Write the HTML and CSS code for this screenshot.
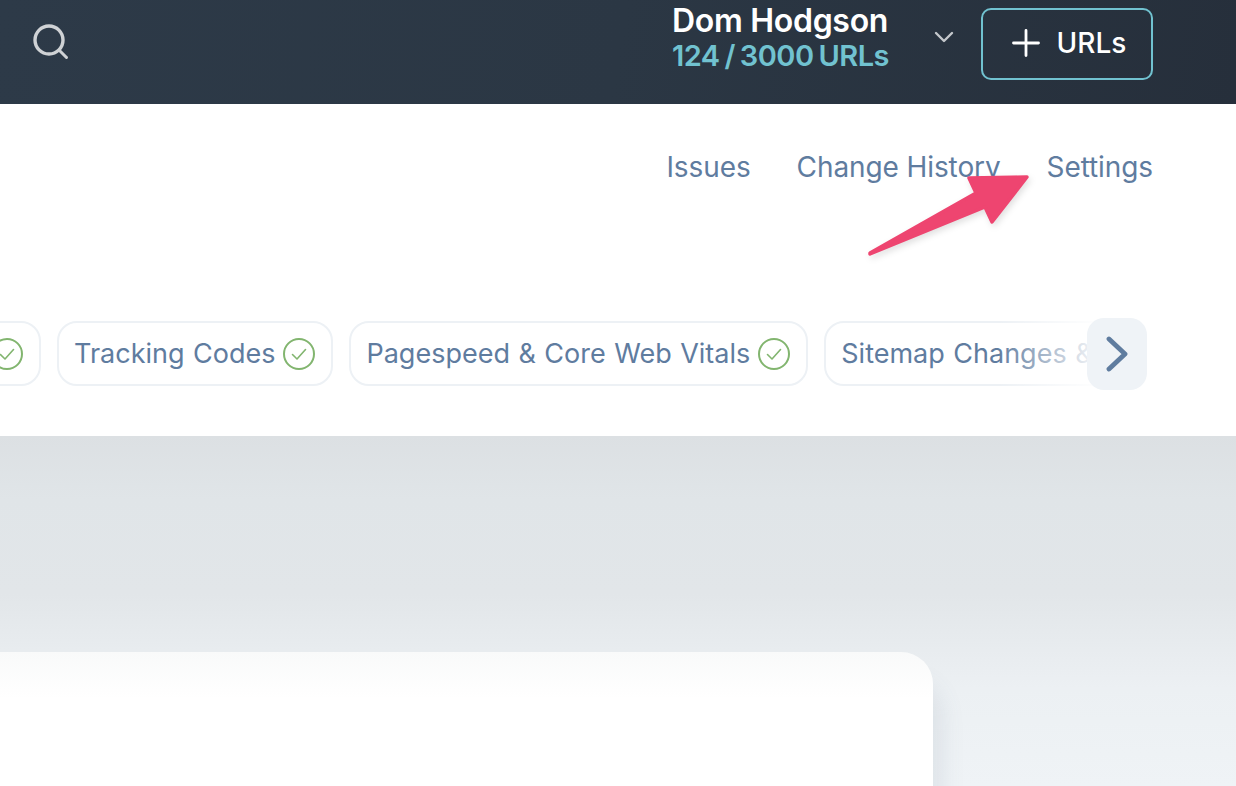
FILE: index.html
```html
<!DOCTYPE html>
<html lang="en">
<head>
<meta charset="utf-8">
<title>Settings</title>
<link rel="stylesheet" href="styles.css">
</head>
<body>
<header class="topbar">
  <svg class="search" viewBox="0 0 36 36" width="36" height="36" fill="none" stroke="#cfd2d5" stroke-linecap="round">
    <circle cx="16" cy="16" r="14" stroke-width="3.400"/>
    <path d="M26.500 26.500 33.500 33.500" stroke-width="3"/>
  </svg>
  <div class="account">
    <div class="user">
      <div class="name">Dom Hodgson</div>
      <div class="quota">124 / 3000 URLs</div>
    </div>
    <svg class="caret" viewBox="0 0 20 12" width="20" height="12" fill="none" stroke="#c4c8cc" stroke-width="2.400" stroke-linecap="round" stroke-linejoin="round">
      <path d="M2 2 10 10 18 2"/>
    </svg>
    <button class="add">
      <svg viewBox="0 0 28 28" width="28" height="28" fill="none" stroke="#fff" stroke-width="2.800" stroke-linecap="round">
        <path d="M14 1.500V26.500M1.500 14H26.500"/>
      </svg>
      <span>URLs</span>
    </button>
  </div>
</header>

<section class="panel">
  <nav class="links">
    <a>Issues</a>
    <a>Change History</a>
    <a>Settings</a>
  </nav>
  <div class="strip">
    <div class="pills">
      <div class="pill pill-first"><svg class="check" viewBox="0 0 32 32" width="32" height="32" fill="none" stroke="#82b56f"><circle cx="16" cy="16" r="15" stroke-width="2"/><path d="M9.500 16.500 14 21 22.500 11.500" stroke-width="1.600" stroke-linecap="round" stroke-linejoin="round"/></svg></div>
      <div class="pill">Tracking Codes<svg class="check" viewBox="0 0 32 32" width="32" height="32" fill="none" stroke="#82b56f"><circle cx="16" cy="16" r="15" stroke-width="2"/><path d="M9.500 16.500 14 21 22.500 11.500" stroke-width="1.600" stroke-linecap="round" stroke-linejoin="round"/></svg></div>
      <div class="pill">Pagespeed &amp; Core Web Vitals<svg class="check" viewBox="0 0 32 32" width="32" height="32" fill="none" stroke="#82b56f"><circle cx="16" cy="16" r="15" stroke-width="2"/><path d="M9.500 16.500 14 21 22.500 11.500" stroke-width="1.600" stroke-linecap="round" stroke-linejoin="round"/></svg></div>
      <div class="pill">Sitemap Changes &amp; Errors</div>
    </div>
    <div class="fade"></div>
    <button class="next">
      <svg viewBox="0 0 22 36" width="22" height="36" fill="none" stroke="#5f7c9f" stroke-width="4.800" stroke-linecap="round" stroke-linejoin="round">
        <path d="M3 3 19 18 3 33"/>
      </svg>
    </button>
  </div>
</section>

<main class="content">
  <div class="card"></div>
</main>

<svg class="arrow" viewBox="0 0 180 100" width="180" height="100">
  <path d="M19 93 125 33 118 18 176 17 141 62 134 47 19 94Z" fill="#ee4570" stroke="#ee4570" stroke-width="3.500" stroke-linejoin="round"/>
</svg>
</body>
</html>
```

FILE: styles.css
```css
* { box-sizing: border-box; }

html, body { margin: 0; height: 100%; }

body {
  width: 1236px;
  height: 786px;
  overflow: hidden;
  position: relative;
  display: flex;
  flex-direction: column;
  font-family: Inter, "Liberation Sans", sans-serif;
  background: #fff;
}

.topbar {
  height: 104px;
  flex: none;
  display: flex;
  align-items: flex-start;
  justify-content: space-between;
  padding: 8px 83px 0 33px;
  background: linear-gradient(100deg, #2d3a48 0%, #2b3744 50%, #262f3b 100%);
}

.search { margin-top: 16px; }

.account { display: flex; align-items: flex-start; }

.user { margin-right: 0; }

.name {
  color: #fff;
  font-size: 32px;
  font-weight: 600;
  line-height: 26px;
  letter-spacing: -0.3px;
  margin-bottom: 6px;
}

.quota {
  color: #71c2d0;
  font-size: 29px;
  font-weight: 600;
  line-height: 32px;
  letter-spacing: -0.5px;
  word-spacing: -2px;
}

.caret { margin: 23px 27px 0 45px; }

.add {
  width: 172px;
  height: 72px;
  display: flex;
  align-items: center;
  justify-content: center;
  gap: 17px;
  padding: 0 0 2px 4px;
  background: transparent;
  border: 2px solid #71c2d0;
  border-radius: 10px;
  color: #fff;
  font: 500 28px Inter, "Liberation Sans", sans-serif;
}

.panel {
  height: 332px;
  flex: none;
  background: #fff;
  padding: 46px 0 0;
}

.links {
  display: flex;
  justify-content: flex-end;
  gap: 46px;
  padding-right: 83px;
  color: #5f7c9f;
  font-size: 28px;
  line-height: 34px;
  letter-spacing: -0.1px;
}

.strip {
  position: relative;
  width: 1147px;
  height: 72px;
  margin-top: 134px;
  overflow: hidden;
}

.pills {
  display: flex;
  gap: 16px;
  padding-top: 3px;
  margin-left: -160px;
}

.pill {
  flex: none;
  height: 65px;
  display: flex;
  align-items: center;
  gap: 8px;
  padding: 0 16px 0 15px;
  border: 2px solid #edf1f5;
  border-radius: 20px;
  color: #5f7c9f;
  font-size: 27px;
  word-spacing: 0.9px;
  white-space: nowrap;
  background: #fff;
}

.pill-first { width: 201px; justify-content: flex-end; }

.fade {
  position: absolute;
  top: 0;
  right: 0;
  width: 150px;
  height: 72px;
  background: linear-gradient(90deg, rgba(255,255,255,0), #fff 70%);
}

.next {
  position: absolute;
  top: 0;
  right: 0;
  width: 60px;
  height: 72px;
  padding: 0;
  display: flex;
  align-items: center;
  justify-content: center;
  background: #eff3f7;
  border: 0;
  border-radius: 17px;
}

.content {
  flex: 1;
  min-height: 0;
  display: flex;
  padding-top: 216px;
  background: linear-gradient(180deg, #dce0e3 0%, #e0e5e8 18%, #e2e6e9 45%, #ecf0f3 72%, #eff3f6 100%);
}

.card {
  width: 933px;
  border-radius: 0 32px 0 0;
  background: linear-gradient(180deg, #f9fafa 0%, #ffffff 35%);
  box-shadow: 8px 30px 24px rgba(90, 110, 130, 0.12);
}

.arrow {
  position: absolute;
  left: 851px;
  top: 160px;
  filter: drop-shadow(2px 3px 3px rgba(0,0,0,0.12));
}
```
